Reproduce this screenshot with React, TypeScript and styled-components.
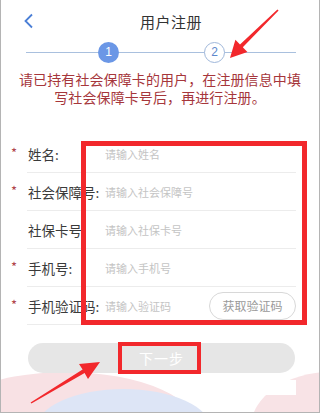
import styled, { createGlobalStyle } from "styled-components";

const GlobalStyle = createGlobalStyle`
  body {
    margin: 0;
    background: #fff;
    font-family: "Noto Sans CJK SC", "Noto Sans", sans-serif;
  }
  * {
    box-sizing: border-box;
  }
`;

/*----------------------------------
	Page
----------------------------------*/
const Page = styled.div`
  position: relative;
  width: 320px;
  height: 413px;
  border: 1px solid #b4b4b4;
  border-top: none;
  background: #fff;
  overflow: hidden;
`;

const Content = styled.div`
  position: relative;
  z-index: 1;
  display: flex;
  flex-direction: column;
`;

/*----------------------------------
	Header
----------------------------------*/
const Header = styled.header`
  display: grid;
  grid-template-columns: 1fr auto 1fr;
  align-items: center;
  height: 42px;
  padding-left: 22px;
`;

const BackButton = styled.button`
  width: 14px;
  height: 18px;
  padding: 0;
  border: none;
  background: none;
  display: flex;
  align-items: center;
`;

const Title = styled.h1`
  margin: 0;
  font-size: 15px;
  font-weight: 400;
  color: #333;
  letter-spacing: 0.5px;
`;

/*----------------------------------
	Stepper
----------------------------------*/
const Stepper = styled.div`
  position: relative;
  display: flex;
  justify-content: space-between;
  align-items: center;
  height: 20px;
  margin: 0 23px 0 25px;
  padding: 0 71px 0 72px;

  &::before {
    content: "";
    position: absolute;
    left: 0;
    right: 0;
    top: 50%;
    height: 1px;
    background: #a9c0de;
  }
`;

const StepDot = styled.span<{ $active?: boolean }>`
  position: relative;
  width: 21px;
  height: 21px;
  border-radius: 50%;
  display: flex;
  align-items: center;
  justify-content: center;
  font-family: "Liberation Sans", Arial, sans-serif;
  font-size: 12px;
  background: ${(p) => (p.$active ? "#6b97e6" : "#fff")};
  color: ${(p) => (p.$active ? "#fff" : "#5d88cc")};
  border: ${(p) => (p.$active ? "none" : "1.5px solid #9fb7da")};
`;

/*----------------------------------
	Notice
----------------------------------*/
const Notice = styled.div`
  margin-top: 8px;
  display: flex;
  flex-direction: column;
  align-items: center;
  color: #a6363b;
`;

const NoticeLine = styled.span`
  font-size: 14px;
  line-height: 18px;
  height: 18px;
  letter-spacing: 0.1px;
`;

/*----------------------------------
	Form
----------------------------------*/
const Form = styled.div`
  position: relative;
  margin-top: 29px;
`;

const Row = styled.div`
  display: flex;
  height: 38px;
`;

const Marker = styled.span`
  width: 26px;
  padding-top: 8px;
  text-align: center;
  font-size: 13px;
  color: #b0444a;
`;

const Field = styled.div`
  flex: 1;
  display: flex;
  align-items: center;
  margin-right: 23px;
  border-bottom: 1px solid #ececec;
`;

const Label = styled.label`
  width: 78px;
  padding-left: 1px;
  font-size: 13.5px;
  color: #3a3a3a;
  white-space: nowrap;
`;

const Input = styled.input`
  flex: 1;
  min-width: 0;
  border: none;
  background: transparent;
  outline: none;
  padding: 0;
  font-family: inherit;
  font-size: 11px;
  color: #333;

  &::placeholder {
    color: #c4c4c4;
  }
`;

const CodeButton = styled.button`
  width: 87px;
  height: 28px;
  border: 1px solid #d8d8d8;
  border-radius: 14px;
  background: #fff;
  font-family: inherit;
  font-size: 12px;
  color: #9a9a9a;
  padding: 0;
  margin-left: -82px;
`;

const Highlight = styled.div<{ $thick: number }>`
  position: absolute;
  border: ${(p) => p.$thick}px solid #f2282c;
  pointer-events: none;
`;

const FormHighlight = styled(Highlight)`
  left: 80px;
  top: 6px;
  width: 226px;
  height: 184px;
`;

/*----------------------------------
	Next button
----------------------------------*/
const NextButton = styled.button`
  position: relative;
  height: 30px;
  margin: 18px 24px 0 27px;
  border: none;
  border-radius: 15px;
  background: #e6e6e6;
  font-family: inherit;
  font-size: 14px;
  letter-spacing: 1px;
  color: #fff;
`;

const NextHighlight = styled(Highlight)`
  left: 90px;
  top: -1px;
  width: 83px;
  height: 32px;
`;

/*----------------------------------
	Decorations
----------------------------------*/
const Blob = styled.div<{ $color: string }>`
  position: absolute;
  border-radius: 50%;
  background: ${(p) => p.$color};
`;

const PinkLeft = styled(Blob)`
  left: -70px;
  top: 372px;
  width: 270px;
  height: 120px;
`;

const BlueMid = styled(Blob)`
  left: 35px;
  top: 389px;
  width: 175px;
  height: 80px;
`;

const PinkRight = styled(Blob)`
  left: 250px;
  top: 372px;
  width: 160px;
  height: 110px;
`;

const Patch = styled.div`
  position: absolute;
  left: 227px;
  top: 380px;
  width: 68px;
  height: 15px;
  background: #fff;
`;

const Arrows = styled.svg`
  position: absolute;
  inset: 0;
  z-index: 5;
  pointer-events: none;
`;

const fields = [
  { label: "姓名:", placeholder: "请输入姓名", required: true },
  { label: "社会保障号:", placeholder: "请输入社会保障号", required: true },
  { label: "社保卡号", placeholder: "请输入社保卡号", required: false },
  { label: "手机号:", placeholder: "请输入手机号", required: true },
  { label: "手机验证码:", placeholder: "请输入验证码", required: true, code: true },
];

const RegisterPage = () => {
  return (
    <Page>
      <PinkLeft $color="#f8e1e4" />
      <BlueMid $color="#dde5f6" />
      <PinkRight $color="#f8e3e6" />
      <Patch />
      <Content>
        <Header>
          <BackButton aria-label="返回">
            <svg width="11" height="16" viewBox="0 0 11 16">
              <path d="M9 1.5 L2.5 8 L9 14.5" fill="none" stroke="#4b7fd6" strokeWidth="1.8" />
            </svg>
          </BackButton>
          <Title>用户注册</Title>
          <span />
        </Header>
        <Stepper>
          <StepDot $active>1</StepDot>
          <StepDot>2</StepDot>
        </Stepper>
        <Notice>
          <NoticeLine>请已持有社会保障卡的用户，在注册信息中填</NoticeLine>
          <NoticeLine>写社会保障卡号后，再进行注册。</NoticeLine>
        </Notice>
        <Form>
          {fields.map((f) => (
            <Row key={f.label}>
              <Marker>{f.required ? "*" : ""}</Marker>
              <Field>
                <Label>{f.label}</Label>
                <Input placeholder={f.placeholder} />
                {f.code && <CodeButton>获取验证码</CodeButton>}
              </Field>
            </Row>
          ))}
          <FormHighlight $thick={5} />
        </Form>
        <NextButton>
          下一步
          <NextHighlight $thick={4} />
        </NextButton>
      </Content>
      <Arrows width="320" height="413" viewBox="0 0 320 413">
        <polygon
          points="277.6,10.4 241.8,47.2 246.4,52 229,58 234.4,39.7 239,44.4 276.4,9.6"
          fill="#f2282c"
        />
        <polygon
          points="30.4,403.6 83.6,373 87,379 99,362 78,364 81.6,369.6 29.6,402.4"
          fill="#f2282c"
        />
      </Arrows>
    </Page>
  );
};

export default function App() {
  return (
    <>
      <GlobalStyle />
      <RegisterPage />
    </>
  );
}
